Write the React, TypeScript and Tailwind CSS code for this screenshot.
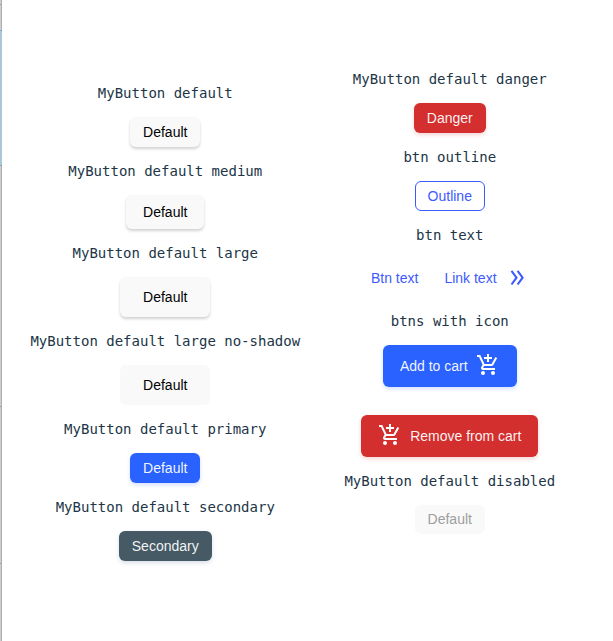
import type { ReactNode } from "react";
import { MdAddShoppingCart } from "react-icons/md";

const variants = {
  default: "bg-[#f9f9f9] text-black",
  primary: "bg-[#2962ff] text-white/95",
  secondary: "bg-[#455a64] text-white/95",
  danger: "bg-[#d32f2f] text-white/95",
  outline: "border border-[#3d5afe] bg-white text-[#3d5afe]",
  disabled: "bg-[#f9f9f9] text-[#9e9e9e]",
};

const shadows = {
  none: "",
  gray: "shadow-[0_2px_3px_rgba(0,0,0,0.18)]",
  blue: "shadow-[0_2px_4px_rgba(41,98,255,0.2)]",
  slate: "shadow-[0_2px_4px_rgba(69,90,150,0.2)]",
  red: "shadow-[0_2px_4px_rgba(211,47,47,0.2)]",
};

const sizes = {
  small: "h-[30px] w-[70px]",
  secondary: "h-[30px] w-[93px]",
  danger: "h-[30px] w-[72px]",
  disabled: "h-[29px] w-[70px] pb-px",
  medium: "h-[34px] w-[78px]",
  large: "h-10 w-[90px]",
  cart: "h-[42px] w-[134px] gap-2",
  remove: "h-[42px] w-[177px] gap-2",
};

type ButtonProps = {
  variant?: keyof typeof variants;
  size?: keyof typeof sizes;
  shadow?: keyof typeof shadows;
  children: ReactNode;
};

function MyButton({ variant = "default", size = "small", shadow = "none", children }: ButtonProps) {
  return (
    <button
      className={`flex items-center justify-center whitespace-nowrap rounded-md text-sm ${variants[variant]} ${sizes[size]} ${shadows[shadow]}`}
    >
      {children}
    </button>
  );
}

function Title({ children }: { children: ReactNode }) {
  return (
    <h4 className="my-3.5 h-5 whitespace-nowrap font-['DejaVu_Sans_Mono',monospace] text-sm leading-5 text-[#213547]">
      {children}
    </h4>
  );
}

function DoubleChevron() {
  return (
    <svg width="24" height="24" viewBox="0 0 24 24" fill="none" stroke="currentColor" strokeWidth="2.1">
      <path d="M6.5 4.9l5 6.8-5 6.8M12.6 4.9l5 6.8-5 6.8" />
    </svg>
  );
}

export default function App() {
  return (
    <div className="flex h-[641px] w-[613px] overflow-hidden bg-white font-['Liberation_Sans',Arial,sans-serif]">
      <div className="flex w-0.5 shrink-0 flex-col border-r border-[#adadad] bg-[#cfcfcf]">
        <div className="h-[5px] border-b border-[#999]" />
        <div className="h-[25px]" />
        <div className="-mr-px h-[136px] border-y border-[#7ea9c3] bg-[#abc6d4]" />
        <div className="h-[241px] border-b border-[#999]" />
        <div className="h-[157px] border-b border-[#999]" />
      </div>
      <main className="flex pl-[21px]">
        <section className="flex w-[284.5px] flex-col items-center pt-[69px]">
          <Title>MyButton default</Title>
          <MyButton shadow="gray">Default</MyButton>
          <Title>MyButton default medium</Title>
          <MyButton size="medium" shadow="gray">Default</MyButton>
          <Title>MyButton default large</Title>
          <MyButton size="large" shadow="gray">Default</MyButton>
          <Title>MyButton default large no-shadow</Title>
          <MyButton size="large">Default</MyButton>
          <Title>MyButton default primary</Title>
          <MyButton variant="primary" shadow="blue">Default</MyButton>
          <Title>MyButton default secondary</Title>
          <MyButton variant="secondary" size="secondary" shadow="slate">Secondary</MyButton>
        </section>
        <section className="flex w-[284.5px] flex-col items-center pt-[55px]">
          <Title>MyButton default danger</Title>
          <MyButton variant="danger" size="danger" shadow="red">Danger</MyButton>
          <Title>btn outline</Title>
          <MyButton variant="outline">Outline</MyButton>
          <Title>btn text</Title>
          <div className="flex h-[38px] items-center text-sm text-[#3d5afe]">
            <button>Btn text</button>
            <a className="ml-[26px] flex items-center gap-2">
              Link text
              <DoubleChevron />
            </a>
          </div>
          <Title>btns with icon</Title>
          <MyButton variant="primary" size="cart" shadow="blue">
            Add to cart
            <MdAddShoppingCart size={24} className="-mt-0.5 text-white" />
          </MyButton>
          <div className="h-7" />
          <MyButton variant="danger" size="remove" shadow="red">
            <MdAddShoppingCart size={24} className="-mt-0.5 text-white" />
            Remove from cart
          </MyButton>
          <Title>MyButton default disabled</Title>
          <MyButton variant="disabled" size="disabled">Default</MyButton>
        </section>
      </main>
    </div>
  );
}
